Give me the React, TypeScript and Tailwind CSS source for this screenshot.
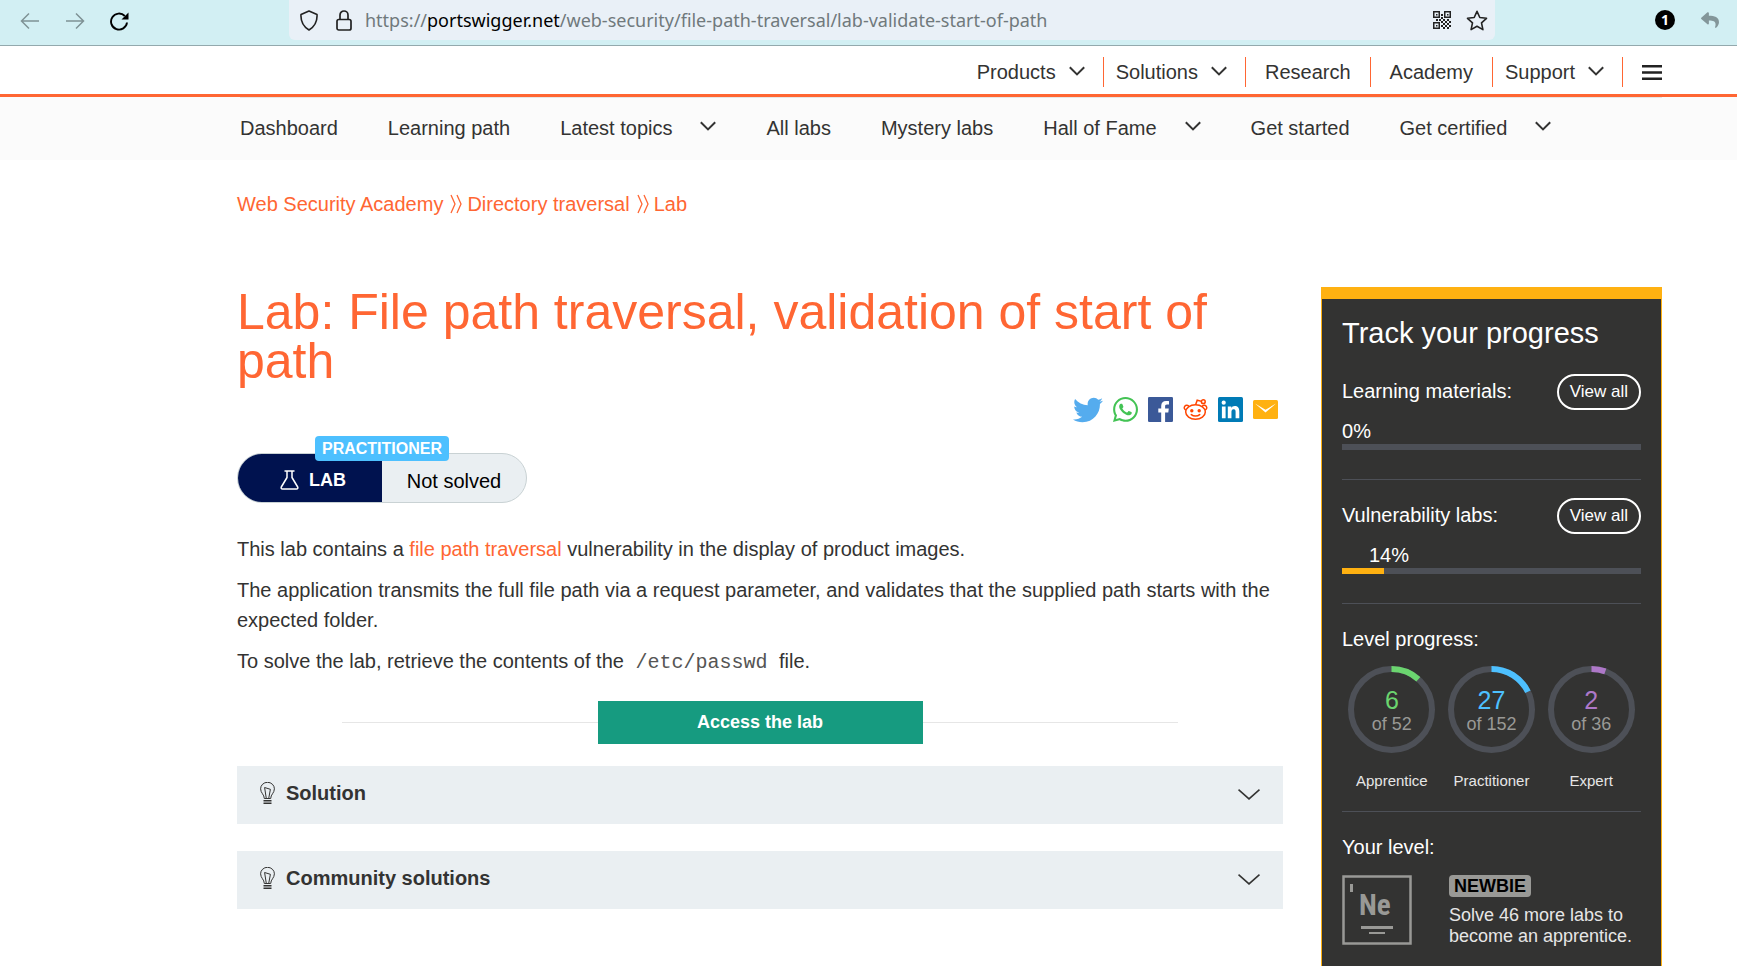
import React from "react";
import { FaReply, FaTwitter, FaWhatsapp } from "react-icons/fa";

type NavItem = { label: string; menu?: boolean };

const topNav: NavItem[] = [
  { label: "Products", menu: true },
  { label: "Solutions", menu: true },
  { label: "Research" },
  { label: "Academy" },
  { label: "Support", menu: true },
];

const academyNav: NavItem[] = [
  { label: "Dashboard" },
  { label: "Learning path" },
  { label: "Latest topics", menu: true },
  { label: "All labs" },
  { label: "Mystery labs" },
  { label: "Hall of Fame", menu: true },
  { label: "Get started" },
  { label: "Get certified", menu: true },
];

const levels = [
  { name: "Apprentice", done: 6, total: 52, text: "text-[#6bd56f]", stroke: "#6bd56f" },
  { name: "Practitioner", done: 27, total: 152, text: "text-[#4dc0ff]", stroke: "#4dc0ff" },
  { name: "Expert", done: 2, total: 36, text: "text-[#ae78c8]", stroke: "#ae78c8" },
];

function Chevron() {
  return (
    <svg width="16" height="13" viewBox="0 0 16 13" fill="none" stroke="currentColor" strokeWidth="2" aria-hidden="true">
      <path d="M0.8 1.2 8 8.4l7.2-7.2" />
    </svg>
  );
}

function Separator() {
  return (
    <svg className="mr-1 ml-[7px]" width="13" height="20" viewBox="0 0 13 20" fill="none" stroke="currentColor" strokeWidth="1.3" aria-hidden="true">
      <path d="M1 1l4 9-4 9M7 1l4 9-4 9" />
    </svg>
  );
}

function QrIcon() {
  return (
    <svg width="18" height="18" viewBox="0 0 18 18" fill="#222" aria-hidden="true">
      <path fillRule="evenodd" d="M0 0h7v7H0zM1.5 1.5v4h4v-4zM11 0h7v7h-7zM12.500 1.500v4h4v-4zM0 11h7v7H0zM1.500 12.500v4h4v-4z" />
      <path d="M3 3h1.500v1.500H3zM14 3h1.500v1.500H14zM3 14h1.500v1.500H3zM8 3h2v2H8zM3 8h2v2H3zM6 8h2v2H6zM8 6h2v2H8zM10 8h2v2h-2zM14 8h2v2h-2zM8 10h2v2H8zM12 10h2v2h-2zM16 10h2v2h-2zM10 12h2v2h-2zM14 12h2v2h-2zM8 14h2v2H8zM12 14h2v2h-2zM16 14h2v2h-2zM10 16h2v2h-2zM14 16h2v2h-2z" />
    </svg>
  );
}

function BrowserBar() {
  return (
    <div className="flex h-[46px] items-start border-b border-[#93a9ad] bg-[#d2eff3] pr-[18px] pl-5">
      <div className="flex h-[42px] w-[269px] shrink-0 items-center gap-[25px] text-[#7f9295]">
        <button aria-label="Back">
          <svg width="20" height="18" viewBox="0 0 20 18" fill="none" stroke="currentColor" strokeWidth="1.5">
            <path d="M19 9H2M9 1.500 1.500 9 9 16.500" />
          </svg>
        </button>
        <button aria-label="Forward">
          <svg width="20" height="18" viewBox="0 0 20 18" fill="none" stroke="currentColor" strokeWidth="1.500">
            <path d="M1 9h17M11 1.500 18.500 9 11 16.500" />
          </svg>
        </button>
        <button aria-label="Reload" className="text-black">
          <svg width="19" height="19" viewBox="0 0 19 19" fill="none" stroke="currentColor" strokeWidth="1.900">
            <path d="M17 10.500A8 8 0 1 1 14.800 4" />
            <path d="M18.500 0.500v7h-7z" fill="currentColor" stroke="none" />
          </svg>
        </button>
      </div>
      <div className="flex h-10 min-w-0 flex-1 items-center rounded-b-md bg-[#e9f0f7] pr-[7px] pl-[11px]">
        <svg width="18" height="21" viewBox="0 0 18 21" fill="none" stroke="#222" strokeWidth="1.600" strokeLinejoin="round" aria-hidden="true">
          <path d="M9 1 17 4.500c.4 6-1.500 11.500-8 15.500C2.500 16 .6 10.500 1 4.500z" />
        </svg>
        <svg className="ml-[18px]" width="16" height="21" viewBox="0 0 16 21" fill="none" stroke="#222" strokeWidth="1.700" aria-hidden="true">
          <rect x="1" y="9.500" width="14" height="10.500" rx="1.800" />
          <path d="M4 9.500V5a4 4 0 0 1 8 0v4.500" />
        </svg>
        <div className="ml-[13px] min-w-0 flex-1 truncate font-['Noto_Sans',sans-serif] text-lg leading-6 text-[#70797c]">
          https://<span className="text-black">portswigger.net</span>/web-security/file-path-traversal/lab-validate-start-of-path
        </div>
        <button aria-label="QR code">
          <QrIcon />
        </button>
        <button aria-label="Bookmark" className="ml-[15px]">
          <svg width="22" height="21" viewBox="0 0 22 21" fill="none" stroke="#222" strokeWidth="1.600" strokeLinejoin="round">
            <path d="M11 1.300 13.800 7.500l6.700.8-5 4.600 1.400 6.700L11 16.200l-5.900 3.400 1.400-6.700-5-4.600 6.700-.8z" />
          </svg>
        </button>
      </div>
      <div className="ml-40 flex h-10 shrink-0 items-center gap-[26px]">
        <span className="flex size-5 items-center justify-center rounded-full bg-black font-['Noto_Sans',sans-serif] text-sm leading-5 font-bold text-white">1</span>
        <button aria-label="Undo" className="text-[#839699]">
          <FaReply className="size-[18px]" />
        </button>
      </div>
    </div>
  );
}

function SiteHeader() {
  return (
    <header>
      <div className="flex justify-end border-b-[3px] border-[#ff6633] pt-[11px] pr-[75px] pb-[7px]">
        <nav className="flex text-xl leading-[30px]" aria-label="Site">
          {topNav.map((item) =>
            item.menu ? (
              <button key={item.label} className="flex items-center gap-[13px] border-r border-[#ff6633] pr-[18px] pl-3">
                {item.label}
                <Chevron />
              </button>
            ) : (
              <a key={item.label} href="#" className="border-r border-[#ff6633] px-[19px]">
                {item.label}
              </a>
            ),
          )}
        </nav>
        <button aria-label="Menu" className="ml-[19px]">
          <svg width="20" height="15" viewBox="0 0 20 15" fill="#222">
            <path d="M0 0h20v2.500H0zM0 6.200h20v2.500H0zM0 12.500h20V15H0z" />
          </svg>
        </button>
      </div>
      <div className="bg-[#fbfbfb] pr-[75px] pl-[240px]">
        <nav className="flex h-[63px] items-center gap-[50px] border-t border-[#e6e6e6] pb-[3px] text-xl leading-[30px]" aria-label="Academy">
          {academyNav.map((item) =>
            item.menu ? (
              <button key={item.label} className="flex items-center gap-7">
                {item.label}
                <Chevron />
              </button>
            ) : (
              <a key={item.label} href="#">
                {item.label}
              </a>
            ),
          )}
        </nav>
      </div>
    </header>
  );
}

function RedditIcon() {
  return (
    <svg width="25" height="25" viewBox="0 0 25 25" fill="none" stroke="#ff4500" strokeWidth="1.500">
      <ellipse cx="12.500" cy="15" rx="9.800" ry="7.200" />
      <path d="M3.200 13.200A2.500 2.500 0 1 1 6 9.700M21.800 13.200A2.500 2.500 0 1 0 19 9.700" />
      <path d="M12.600 7.800 14.200 3.200l4.400 1.200" />
      <circle cx="20.300" cy="4.700" r="1.900" />
      <path d="M8.300 17.600c2.300 2 6.100 2 8.400 0" strokeLinecap="round" />
      <circle cx="8.800" cy="13.800" r="1.700" fill="#ff4500" stroke="none" />
      <circle cx="16.200" cy="13.800" r="1.700" fill="#ff4500" stroke="none" />
    </svg>
  );
}

function FacebookIcon() {
  return (
    <svg width="25" height="25" viewBox="0 0 25 25">
      <rect width="25" height="25" rx="1.300" fill="#3b5998" />
      <path fill="#fff" d="M13.200 25v-9.600H10.300v-3.800h2.900V8.900c0-3.200 2-4.900 4.800-4.900 1.400 0 2.600.1 3 .15v3.400h-2c-1.600 0-1.900.8-1.900 1.900v2.150h3.700l-.5 3.800h-3.200V25z" />
    </svg>
  );
}

function LinkedinIcon() {
  return (
    <svg width="25" height="25" viewBox="0 0 25 25">
      <rect width="25" height="25" rx="1.500" fill="#007bb6" />
      <g fill="#fff">
        <circle cx="5.700" cy="5.700" r="2.100" />
        <path d="M3.900 9.400h3.700v11.900H3.900zM9.800 9.400h3.500V11c.5-.95 1.700-1.950 3.500-1.950 3.700 0 4.500 2.450 4.500 5.700v6.550h-3.700v-5.800c0-1.400 0-3.150-1.950-3.150s-2.200 1.500-2.200 3.050v5.900H9.800z" />
      </g>
    </svg>
  );
}

function ShareLinks() {
  return (
    <div className="mt-[11px] flex h-[25px] items-center justify-end gap-[10px] pr-[5px]">
      <a href="#" aria-label="Twitter" className="text-[#55acee]">
        <FaTwitter className="size-[30px]" />
      </a>
      <a href="#" aria-label="WhatsApp" className="text-[#43c354]">
        <FaWhatsapp className="h-[29px] w-[25px]" />
      </a>
      <a href="#" aria-label="Facebook">
        <FacebookIcon />
      </a>
      <a href="#" aria-label="Reddit">
        <RedditIcon />
      </a>
      <a href="#" aria-label="LinkedIn">
        <LinkedinIcon />
      </a>
      <a href="#" aria-label="Email">
        <svg width="25" height="19" viewBox="0 0 25 19">
          <rect width="25" height="19" rx="1.500" fill="#ffb111" />
          <path d="M2 3.500 12.500 12.500 23 3.500 12.500 9.800z" fill="#fff" />
        </svg>
      </a>
    </div>
  );
}

function LabStatus() {
  return (
    <div className="relative mt-[31px] flex h-[50px] w-[290px] rounded-full border border-[#c9d2d4] bg-[#eaeff2] text-black">
      <div className="flex w-[144px] items-center justify-center gap-[10px] rounded-l-full bg-[#00124f] pt-1 pl-[6px] text-lg leading-6 font-bold text-white">
        <svg width="19" height="20" viewBox="0 0 19 20" fill="none" stroke="currentColor" strokeWidth="1.500" strokeLinejoin="round" aria-hidden="true">
          <path d="M4.500 1h10M7 1v6.500L1.300 17c-.5 1 0 2 1.200 2h14c1.200 0 1.700-1 1.200-2L12 7.500V1" />
        </svg>
        LAB
      </div>
      <div className="flex flex-1 items-center justify-center pt-[5px] text-xl leading-6">Not solved</div>
      <span className="absolute -top-[18px] left-[77px] rounded bg-[#4dc0ff] px-[7px] pt-px text-base leading-6 font-bold text-white">
        PRACTITIONER
      </span>
    </div>
  );
}

function Hint({ title }: { title: string }) {
  return (
    <button className="flex w-full items-center bg-[#eaeff2] pt-3 pr-[23px] pb-4 pl-[23px] text-xl leading-[30px] font-bold">
      <svg width="15" height="22" viewBox="0 0 15 22" fill="none" stroke="currentColor" strokeWidth="1" aria-hidden="true">
        <path d="M4.300 16.500C4.300 12.500.6 11 .6 6.800a6.900 6.500 0 0 1 13.800 0c0 4.200-3.700 5.700-3.700 9.700z" />
        <path d="M6.300 16.500 4.600 5.500l5.800 1.800-1.700 9.200" />
        <path d="M3.500 18.800h8M3.500 21.200h8" strokeWidth="1.400" />
      </svg>
      <span className="ml-[11px]">{title}</span>
      <svg className="ml-auto" width="22" height="13" viewBox="0 0 22 13" fill="none" stroke="currentColor" strokeWidth="1.600" aria-hidden="true">
        <path d="M.5 2.600 11 11.900 21.500 2.600" />
      </svg>
    </button>
  );
}

function ProgressBlock({ label, percent, indent }: { label: string; percent: number; indent: string }) {
  return (
    <div className="border-b border-[#4d5057] pb-[29px]">
      <div className="flex items-center justify-between">
        <h3 className="pb-[3px] text-xl leading-[26px]">{label}</h3>
        <a href="#" className="rounded-full border-2 border-white px-[11px] text-[17px] leading-8">
          View all
        </a>
      </div>
      <p className={`mt-2 text-xl leading-[26px] ${indent}`}>{percent}%</p>
      <div className="h-[6px] bg-[#4d5057]">
        <div className="h-full bg-[#ffb111]" style={{ width: `${percent}%` }} />
      </div>
    </div>
  );
}

function LevelRing({ name, done, total, text, stroke }: (typeof levels)[number]) {
  return (
    <div className="flex flex-col items-center">
      <div className="relative flex size-[87px] flex-col items-center justify-center">
        <svg className="absolute inset-0" width="87" height="87" viewBox="0 0 87 87" fill="none" strokeWidth="6" aria-hidden="true">
          <circle cx="43.500" cy="43.500" r="40.500" stroke="#4d5057" />
          <circle
            cx="43.500"
            cy="43.500"
            r="40.500"
            stroke={stroke}
            pathLength={total}
            strokeDasharray={`${done} ${total}`}
            transform="rotate(-90 43.500 43.500)"
          />
        </svg>
        <span className={`text-[25px] leading-7 ${text}`}>{done}</span>
        <span className="text-lg leading-5 text-[#999996]">of {total}</span>
      </div>
      <span className="mt-[18px] text-[15px] leading-5 text-[#e6e6e6]">{name}</span>
    </div>
  );
}

function ProgressPanel() {
  return (
    <aside className="w-[341px] shrink-0 border-x border-t-[12px] border-[#ffb111] bg-[#333332] px-5 pt-4 text-white">
      <h2 className="mb-[23px] text-[29px] leading-9">Track your progress</h2>
      <div className="flex flex-col gap-[18px]">
        <ProgressBlock label="Learning materials:" percent={0} indent="pl-0" />
        <ProgressBlock label="Vulnerability labs:" percent={14} indent="pl-[27px]" />
      </div>
      <section className="border-b border-[#4d5057] pt-[22px] pb-5">
        <h3 className="text-xl leading-[26px]">Level progress:</h3>
        <div className="mt-[14px] grid grid-cols-3">
          {levels.map((level) => (
            <LevelRing key={level.name} {...level} />
          ))}
        </div>
      </section>
      <section className="pt-[22px]">
        <h3 className="text-xl leading-[26px]">Your level:</h3>
        <div className="mt-[15px] flex gap-[37px]">
          <svg className="shrink-0" width="70" height="70" viewBox="0 0 70 70" fill="#999996">
            <rect x="1.500" y="1.500" width="67" height="67" fill="none" stroke="#999996" strokeWidth="2.500" />
            <path d="M8 9h3v8H8zM19 51h32v3H19zM27 57h16v2H27z" />
            <text x="17" y="40" className="font-['Liberation_Sans_Narrow','Roboto_Condensed','Liberation_Sans',sans-serif] text-[29px] font-bold">
              Ne
            </text>
          </svg>
          <div>
            <span className="inline-block rounded bg-[#999996] px-[5px] align-top text-lg leading-[22px] font-bold text-black">NEWBIE</span>
            <p className="mt-[6px] text-lg leading-[21px] text-[#e6e6e6]">Solve 46 more labs to become an apprentice.</p>
          </div>
        </div>
      </section>
    </aside>
  );
}

export default function App() {
  return (
    <div className="flex min-h-screen flex-col bg-white font-['Liberation_Sans',Arial,sans-serif] text-[#333332]">
      <BrowserBar />
      <SiteHeader />
      <main className="flex flex-1 flex-col pt-[29px] pr-[75px] pl-[237px]">
        <nav className="flex items-center text-xl leading-[30px] text-[#ff6633]" aria-label="Breadcrumb">
          <a href="#">Web Security Academy</a>
          <Separator />
          <a href="#">Directory traversal</a>
          <Separator />
          <a href="#">Lab</a>
        </nav>
        <div className="mt-[68px] flex flex-1 gap-[38px]">
          <article className="min-w-0 flex-1">
            <h1 className="pt-px text-[50px] leading-[49px] text-[#ff6633]">Lab: File path traversal, validation of start of path</h1>
            <ShareLinks />
            <LabStatus />
            <div className="mt-[31px] flex flex-col gap-[11px] text-xl leading-[30px]">
              <p>
                This lab contains a{" "}
                <a href="#" className="text-[#ff6633]">
                  file path traversal
                </a>{" "}
                vulnerability in the display of product images.
              </p>
              <p>
                The application transmits the full file path via a request parameter, and validates that the supplied path starts with the
                expected folder.
              </p>
              <p>
                To solve the lab, retrieve the contents of the{" "}
                <code className="px-[6px] font-['Liberation_Mono',monospace] leading-none text-[#555554]">/etc/passwd</code> file.
              </p>
            </div>
            <div className="mt-[25px] flex items-center px-[10%]">
              <div className="h-px flex-1 bg-[#e6e6e6]" />
              <a href="#" className="w-[325px] bg-[#169b80] text-center text-lg leading-[43px] font-bold text-white">
                Access the lab
              </a>
              <div className="h-px flex-1 bg-[#e6e6e6]" />
            </div>
            <div className="mt-[22px] flex flex-col gap-[27px]">
              <Hint title="Solution" />
              <Hint title="Community solutions" />
            </div>
          </article>
          <ProgressPanel />
        </div>
      </main>
    </div>
  );
}
